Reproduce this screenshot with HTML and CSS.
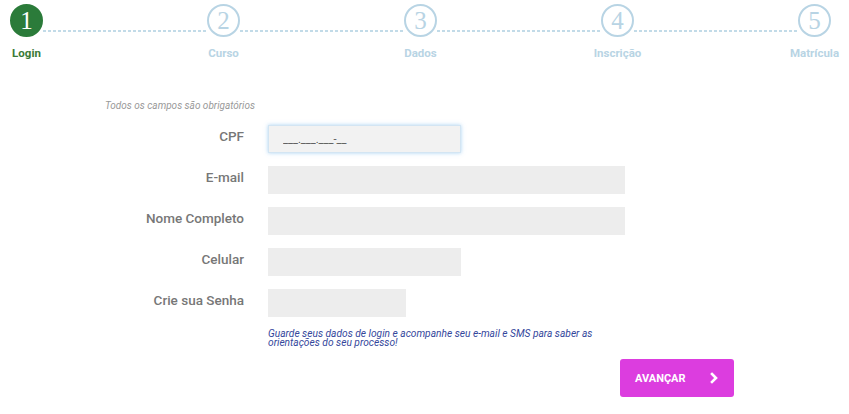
FILE: index.html
```html
<!DOCTYPE html>
<html lang="pt-BR">
<head>
<meta charset="utf-8">
<title>Login</title>
<link rel="stylesheet" href="styles.css">
</head>
<body>
<div class="steps">
  <div class="step active"><div class="circle">1</div><div class="step-label">Login</div></div>
  <div class="connector"></div>
  <div class="step"><div class="circle">2</div><div class="step-label">Curso</div></div>
  <div class="connector"></div>
  <div class="step"><div class="circle">3</div><div class="step-label">Dados</div></div>
  <div class="connector"></div>
  <div class="step"><div class="circle">4</div><div class="step-label">Inscrição</div></div>
  <div class="connector"></div>
  <div class="step"><div class="circle">5</div><div class="step-label">Matrícula</div></div>
</div>

<form class="form">
  <p class="required-note">Todos os campos são obrigatórios</p>
  <div class="fields">
    <label class="field-label">CPF</label>
    <input class="field field-focus w-sm" type="text" value="___.___.___-__">
    <label class="field-label">E-mail</label>
    <input class="field w-lg" type="text">
    <label class="field-label">Nome Completo</label>
    <input class="field w-lg" type="text">
    <label class="field-label">Celular</label>
    <input class="field w-sm" type="text">
    <label class="field-label">Crie sua Senha</label>
    <div class="field-col">
      <input class="field w-xs" type="password">
      <p class="help">Guarde seus dados de login e acompanhe seu e-mail e SMS para saber as orientações do seu processo!</p>
    </div>
  </div>
  <div class="actions">
    <button type="button" class="btn">AVANÇAR
      <svg class="chev" width="10" height="12" viewBox="0 0 10 12"><polyline points="3,2 7,6 3,10" fill="none" stroke="#fff" stroke-width="2.6" stroke-linecap="square" stroke-linejoin="miter"/></svg>
    </button>
  </div>
</form>
</body>
</html>
```
FILE: styles.css
```css
* { box-sizing: border-box; }
html, body { margin: 0; padding: 0; background: #fff; }
body { font-family: Roboto, "Liberation Sans", Arial, sans-serif; width: 849px; height: 414px; overflow: hidden; }

.steps {
  display: flex;
  align-items: flex-start;
  padding: 4px 18px 0 10px;
}
.step {
  width: 33px;
  flex: 0 0 33px;
  display: flex;
  flex-direction: column;
  align-items: center;
}
.circle {
  width: 33px;
  height: 33px;
  border-radius: 50%;
  border: 2px solid #b8d4e4;
  color: #b8d4e4;
  font-family: "Liberation Serif", "DejaVu Serif", serif;
  font-size: 25px;
  line-height: 29px;
  text-align: center;
}
.step.active .circle {
  background: #2b7b3a;
  border-color: #2b7b3a;
  color: #fff;
}
.step-label {
  margin-top: 10px;
  font-size: 11.5px;
  font-weight: 700;
  line-height: 13px;
  color: #b8d4e4;
  white-space: nowrap;
}
.step.active .step-label { color: #3a7a36; }
.connector {
  flex: 1;
  height: 2px;
  margin-top: 26px;
  background: repeating-linear-gradient(90deg, #c2dbe8 0 3px, transparent 3px 5px);
}

.form {
  margin: 0 0 0 105px;
  width: 629px;
}
.required-note {
  margin: 40px 0 13px;
  font-size: 10px;
  line-height: 12px;
  font-style: italic;
  color: #999;
}
.fields {
  display: grid;
  grid-template-columns: 139px 1fr;
  column-gap: 24px;
  row-gap: 13px;
  align-items: start;
}
.field-label {
  text-align: right;
  font-size: 13.5px;
  font-weight: 500;
  line-height: 15px;
  padding-top: 4px;
  color: #777;
}
.field {
  display: block;
  height: 28px;
  border: 0;
  background: #ededed;
  padding: 0 14px;
  font-family: inherit;
  font-size: 11px;
  color: #555;
  outline: none;
}
.field-focus {
  background: #f2f2f2;
  border: 1px solid #d3e5f3;
  box-shadow: 0 0 4px rgba(102, 175, 233, 0.55);
}
.w-lg { width: 357px; }
.w-sm { width: 193px; }
.w-xs { width: 138px; }
.field-col { display: flex; flex-direction: column; }
.help {
  margin: 12px 0 0;
  max-width: 345px;
  font-size: 10.2px;
  line-height: 9px;
  font-style: italic;
  color: #34479c;
}
.actions {
  display: flex;
  justify-content: flex-end;
  margin-top: 12px;
}
.btn {
  width: 114px;
  height: 38px;
  border: 0;
  border-radius: 3px;
  background: #dc3ddf;
  color: #fff;
  font-family: inherit;
  font-size: 11px;
  font-weight: 700;
  display: flex;
  align-items: center;
  justify-content: space-between;
  padding: 0 15px 0 15px;
}
.chev { display: block; }
```
